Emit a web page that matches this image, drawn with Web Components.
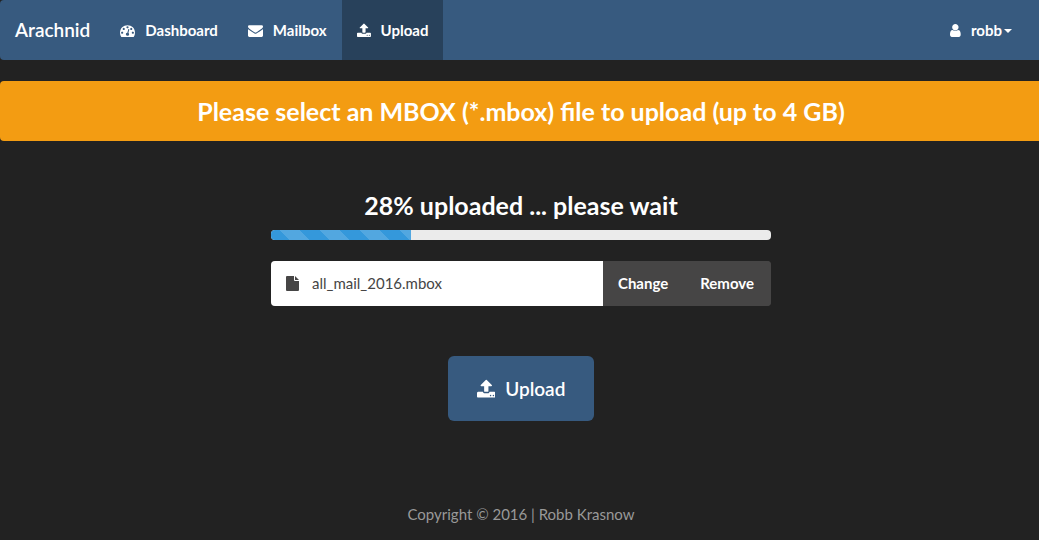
<!DOCTYPE html>
<html lang="en">
<head>
<meta charset="utf-8">
<title>Arachnid - Upload</title>
<style>
html { background: #222; }
body { margin: 0; overflow-x: hidden; font: 15px/21px Lato, "Liberation Sans", sans-serif; color: #fff; }
</style>
</head>
<body>
<arachnid-app></arachnid-app>
<script>
const icons = {
  dashboard: ['0 0 1792 1792', 'M384 1152q0-53-37.5-90.5t-90.5-37.5-90.5 37.5-37.5 90.5 37.5 90.5 90.5 37.5 90.5-37.5 37.5-90.5zm192-448q0-53-37.5-90.5t-90.5-37.5-90.5 37.5-37.5 90.5 37.5 90.5 90.5 37.5 90.5-37.5 37.5-90.5zm428 481l101-382q6-26-7.5-48.5t-38.5-29.5-48 6.5-30 39.5l-101 382q-60 5-107 43.5t-63 98.5q-20 77 20 146t117 89 146-20 89-117q16-60-6-117t-72-91zm660-33q0-53-37.5-90.5t-90.5-37.5-90.5 37.5-37.5 90.5 37.5 90.5 90.5 37.5 90.5-37.5 37.5-90.5zm-640-640q0-53-37.5-90.5t-90.5-37.5-90.5 37.5-37.5 90.5 37.5 90.5 90.5 37.5 90.5-37.5 37.5-90.5zm448 192q0-53-37.5-90.5t-90.5-37.5-90.5 37.5-37.5 90.5 37.5 90.5 90.5 37.5 90.5-37.5 37.5-90.5zm320 448q0 261-141 483-19 29-54 29h-1402q-35 0-54-29-141-221-141-483 0-182 71-348t191-286 286-191 348-71 348 71 286 191 191 286 71 348z'],
  envelope: ['0 0 1792 1792', 'M1792 710v794q0 66-47 113t-113 47h-1472q-66 0-113-47t-47-113v-794q44 49 101 87 362 246 497 345 57 42 92.5 65.5t94.5 48 110 24.5h2q51 0 110-24.5t94.5-48 92.5-65.5q170-123 498-345 57-39 100-87zm0-294q0 79-49 151t-122 123q-376 261-468 325-10 7-42.5 31t-54 38.5-52 32.5-57.5 27-50 9h-2q-23 0-50-9t-57.5-27-52-32.5-54-38.5-42.5-31q-91-64-262-182.5t-205-142.5q-62-42-117-115.5t-55-136.5q0-78 41.5-130t118.5-52h1472q65 0 112.5 47t47.5 113z'],
  upload: ['64 0 1664 1792', 'M1344 1472q0-26-19-45t-45-19-45 19-19 45 19 45 45 19 45-19 19-45zm256 0q0-26-19-45t-45-19-45 19-19 45 19 45 45 19 45-19 19-45zm128-224v320q0 40-28 68t-68 28h-1472q-40 0-68-28t-28-68v-320q0-40 28-68t68-28h427q21 56 70.5 92t110.5 36h256q61 0 110.5-36t70.5-92h427q40 0 68 28t28 68zm-325-648q-17 40-59 40h-256v448q0 26-19 45t-45 19h-256q-26 0-45-19t-19-45v-448h-256q-42 0-59-40-17-39 14-69l448-448q18-19 45-19t45 19l448 448q31 30 14 69z'],
  user: ['256 0 1280 1792', 'M1536 1399q0 109-62.5 187t-150.5 78h-854q-88 0-150.5-78t-62.5-187q0-85 8.5-160.5t31.5-152 58.5-131 94-89 134.5-34.5q131 128 313 128t313-128q76 0 134.5 34.5t94 89 58.5 131 31.5 152 8.5 160.5zm-256-887q0 159-112.5 271.5t-271.5 112.5-271.5-112.5-112.5-271.5 112.5-271.5 271.5-112.5 271.5 112.5 112.5 271.5z'],
  file: ['0 0 13 15', 'M0 1q0-1 1-1h7v4q0 1 1 1h4v9q0 1-1 1H1q-1 0-1-1zM9 0 13 4H9z']
};

class AppIcon extends HTMLElement {
  connectedCallback() {
    const [box, path] = icons[this.getAttribute('name')];
    this.attachShadow({ mode: 'open' }).innerHTML = `
      <style>
        :host { display: block; flex: none; height: var(--icon-size, 15px); }
        svg { display: block; height: 100%; width: auto; fill: currentColor; }
      </style>
      <svg viewBox="${box}" aria-hidden="true"><path d="${path}"/></svg>`;
  }
}
customElements.define('app-icon', AppIcon);

function define(name, markup) {
  const template = document.createElement('template');
  template.innerHTML = markup;
  customElements.define(name, class extends HTMLElement {
    constructor() {
      super();
      this.attachShadow({ mode: 'open' }).append(template.content.cloneNode(true));
    }
  });
}

define('nav-item', `
  <style>
    :host { display: block; }
    a { display: flex; align-items: center; gap: 10px; height: 60px; padding: 0 15px; box-sizing: border-box; color: #fff; text-decoration: none; font-weight: 700; }
    :host([active]) a { background: #28415b; }
    span { display: flex; align-items: center; gap: 2px; }
  </style>
  <a href="#"><slot name="icon"></slot><span><slot></slot></span></a>`);

define('nav-bar', `
  <style>
    :host { display: block; background: #375a7f; border-radius: 4px; }
    nav { display: flex; }
    .brand { padding: 0 15px; font-size: 19px; line-height: 60px; color: #fff; text-decoration: none; font-weight: 600; }
    .end { margin-left: auto; padding-right: 15px; }
    .caret { border: 4px solid transparent; border-top-color: #fff; border-bottom: 0; margin-top: 2px; }
  </style>
  <nav>
    <a class="brand" href="#">Arachnid</a>
    <nav-item><app-icon slot="icon" name="dashboard"></app-icon>Dashboard</nav-item>
    <nav-item><app-icon slot="icon" name="envelope"></app-icon>Mailbox</nav-item>
    <nav-item active><app-icon slot="icon" name="upload"></app-icon>Upload</nav-item>
    <nav-item class="end"><app-icon slot="icon" name="user"></app-icon>robb<i class="caret"></i></nav-item>
  </nav>`);

define('alert-banner', `
  <style>
    :host { display: block; padding: 15px; background: #f39c12; border-radius: 4px; text-align: center; }
    h1 { margin: 0; font-size: 25px; line-height: 30px; font-weight: 700; }
  </style>
  <h1><slot></slot></h1>`);

define('upload-progress', `
  <style>
    :host { display: block; text-align: center; }
    h2 { margin: 0 0 10px; font-size: 25px; line-height: 30px; font-weight: 700; }
    .track { height: 10px; overflow: hidden; border-radius: 4px; background: #ebebeb; }
    .bar { width: 28%; height: 100%; background: #3498db linear-gradient(45deg, rgba(255,255,255,.15) 25%, transparent 25%, transparent 50%, rgba(255,255,255,.15) 50%, rgba(255,255,255,.15) 75%, transparent 75%) 9px 0 / 40px 40px; }
  </style>
  <h2><slot></slot></h2>
  <div class="track" role="progressbar" aria-label="Upload progress" aria-valuemin="0" aria-valuemax="100" aria-valuenow="28"><div class="bar"></div></div>`);

define('file-field', `
  <style>
    :host { display: flex; height: 45px; overflow: hidden; border-radius: 4px; background: #464545; }
    .name { flex: 1; display: flex; align-items: center; gap: 13px; padding: 0 15px; background: #fff; color: #464545; }
    button { padding: 0 15px; border: 0; background: #464545; color: #fff; font: inherit; font-weight: 700; }
    button + button { padding: 0 17px; }
  </style>
  <div class="name"><app-icon name="file"></app-icon><span><slot></slot></span></div>
  <button type="button">Change</button><button type="button">Remove</button>`);

define('upload-button', `
  <style>
    :host { display: block; --icon-size: 20px; }
    button { display: flex; align-items: center; gap: 10px; height: 65px; padding: 0 29px; border: 0; border-radius: 6px; background: #375a7f; color: #fff; font: inherit; font-size: 19px; font-weight: 600; }
  </style>
  <button type="submit"><app-icon name="upload"></app-icon><slot></slot></button>`);

define('arachnid-app', `
  <style>
    /* The page bleeds slightly past the right edge of the window. */
    :host { display: block; margin-right: -3px; }
    alert-banner { margin-top: 21px; }
    main { display: flex; flex-direction: column; align-items: center; margin-top: 49px; }
    upload-progress, file-field { width: 100%; max-width: 500px; }
    file-field { margin-top: 21px; }
    upload-button { margin-top: 50px; }
    footer { margin-top: 83px; padding-bottom: 15px; text-align: center; color: #999; }
  </style>
  <nav-bar></nav-bar>
  <alert-banner>Please select an MBOX (*.mbox) file to upload (up to 4 GB)</alert-banner>
  <main>
    <upload-progress>28% uploaded ... please wait</upload-progress>
    <file-field>all_mail_2016.mbox</file-field>
    <upload-button>Upload</upload-button>
  </main>
  <footer>Copyright © 2016 | Robb Krasnow</footer>`);
</script>
</body>
</html>
